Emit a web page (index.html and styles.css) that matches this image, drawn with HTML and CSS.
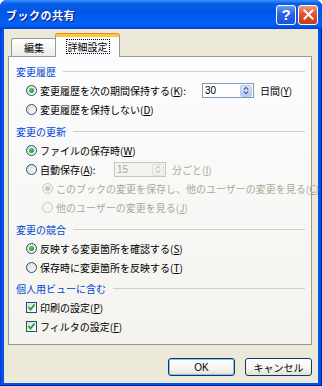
FILE: index.html
```html
<!DOCTYPE html>
<html>
<head>
	<title>ブックの共有</title>
	<link rel="stylesheet" href="styles.css">
</head>
<body>

	<div class="window">
		<div class="titlebar">
			<span class="title">ブックの共有</span>
			<div class="caption-buttons">
				<span class="cap-btn help">?</span>
				<span class="cap-btn close">
					<svg width="11" height="11" viewBox="0 0 11 11"><path d="M1.5 1.5 L9.5 9.5 M9.5 1.5 L1.5 9.5" stroke="#fff" stroke-width="2" stroke-linecap="square"/></svg>
				</span>
			</div>
		</div>

		<div class="client">
			<div class="tabs">
				<div class="tab">編集</div>
				<div class="tab active"><span class="focus">詳細設定</span></div>
			</div>

			<div class="panel">
				<!-- 変更履歴 -->
				<div class="group-title">変更履歴</div>
				<div class="row">
					<span class="radio checked"></span>
					<span class="label wide-k">変更履歴を次の期間保持する(<u>K</u>):</span>
					<span class="spin">
						<span class="spin-value">30</span>
						<span class="spin-btn">
							<svg width="11" height="11" viewBox="0 0 11 11"><path d="M3 4.5 L5.5 2 L8 4.5 M3 6.5 L5.5 9 L8 6.5" fill="none" stroke="#4d6185" stroke-width="1.4"/></svg>
						</span>
					</span>
					<span class="label after">日間(<u>Y</u>)</span>
				</div>
				<div class="row">
					<span class="radio"></span>
					<span class="label">変更履歴を保持しない(<u>D</u>)</span>
				</div>

				<!-- 変更の更新 -->
				<div class="group-title second">変更の更新</div>
				<div class="row">
					<span class="radio checked"></span>
					<span class="label">ファイルの保存時(<u>W</u>)</span>
				</div>
				<div class="row">
					<span class="radio"></span>
					<span class="label wide-a">自動保存(<u>A</u>):</span>
					<span class="spin disabled">
						<span class="spin-value">15</span>
						<span class="spin-btn">
							<svg width="11" height="11" viewBox="0 0 11 11"><path d="M3 4.5 L5.5 2 L8 4.5 M3 6.5 L5.5 9 L8 6.5" fill="none" stroke="#c9c7ba" stroke-width="1.4"/></svg>
						</span>
					</span>
					<span class="label after disabled-text">分ごと(<u>I</u>)</span>
				</div>
				<div class="row sub">
					<span class="radio checked disabled"></span>
					<span class="label disabled-text">このブックの変更を保存し、他のユーザーの変更を見る(<u>C</u>)</span>
				</div>
				<div class="row sub">
					<span class="radio disabled"></span>
					<span class="label disabled-text">他のユーザーの変更を見る(<u>J</u>)</span>
				</div>

				<!-- 変更の競合 -->
				<div class="group-title">変更の競合</div>
				<div class="row">
					<span class="radio checked"></span>
					<span class="label">反映する変更箇所を確認する(<u>S</u>)</span>
				</div>
				<div class="row">
					<span class="radio"></span>
					<span class="label">保存時に変更箇所を反映する(<u>T</u>)</span>
				</div>

				<!-- 個人用ビュー -->
				<div class="group-title">個人用ビューに含む</div>
				<div class="row">
					<span class="checkbox">
						<svg width="9" height="9" viewBox="0 0 9 9"><path d="M1.5 4 L3.5 6.5 L7.5 1.5" fill="none" stroke="#21a121" stroke-width="1.8"/></svg>
					</span>
					<span class="label">印刷の設定(<u>P</u>)</span>
				</div>
				<div class="row">
					<span class="checkbox">
						<svg width="9" height="9" viewBox="0 0 9 9"><path d="M1.5 4 L3.5 6.5 L7.5 1.5" fill="none" stroke="#21a121" stroke-width="1.8"/></svg>
					</span>
					<span class="label">フィルタの設定(<u>F</u>)</span>
				</div>
			</div>

			<div class="buttons">
				<button class="btn default">OK</button>
				<button class="btn">キャンセル</button>
			</div>
		</div>
	</div>

</body>
</html>
```

FILE: styles.css
```css
* {
	box-sizing: border-box;
}

body {
	margin: 0;
	background: #fff;
	font-family: "Noto Sans CJK JP", "Liberation Sans", sans-serif;
	font-size: 10px;
	color: #000;
}

.window {
	width: 322px;
	height: 386px;
	display: flex;
	flex-direction: column;
	background: #0055e5;
	border-radius: 7px 7px 0 0;
	box-shadow: inset 1px 0 #0831d9, inset -1px 0 #001ea0, inset 0 -1px #001ea0;
}

/* title bar */
.titlebar {
	height: 29px;
	display: flex;
	align-items: center;
	justify-content: space-between;
	padding: 0 4px 0 6px;
	border-radius: 7px 7px 0 0;
	background: linear-gradient(to bottom, #3d95ff 0%, #0a5fe8 12%, #0055e5 40%, #0062f7 80%, #0057ea 92%, #003dd7 100%);
}

.title {
	color: #fff;
	font-weight: bold;
	font-size: 11px;
	letter-spacing: 0.5px;
	text-shadow: 1px 1px #0a1883;
}

.caption-buttons {
	display: flex;
	gap: 2px;
}

.cap-btn {
	width: 20px;
	height: 20px;
	border: 1px solid #fff;
	border-radius: 3px;
	display: flex;
	align-items: center;
	justify-content: center;
}

.help {
	background: linear-gradient(to bottom, #6d9cf5, #2a63e8 45%, #1f52d8);
	color: #fff;
	font-family: "Liberation Sans", sans-serif;
	font-weight: bold;
	font-size: 15px;
}

.close {
	background: linear-gradient(to bottom, #f39a7e, #e0552e 45%, #c93c16);
}

/* dialog client area */
.client {
	flex: 1;
	margin: 0 4px 3px 4px;
	padding: 0 6px 0 4px;
	background: #ece9d8;
	display: flex;
	flex-direction: column;
}

.tabs {
	display: flex;
	align-items: flex-end;
	padding-left: 3px;
	margin-top: 5px;
	height: 22px;
}

.tab {
	height: 18px;
	width: 46px;
	border: 1px solid #919b9c;
	border-bottom: none;
	border-radius: 3px 3px 0 0;
	background: linear-gradient(to bottom, #fff, #ecebe6);
	display: flex;
	align-items: center;
	justify-content: center;
	margin-bottom: 0;
}

.tab.active {
	position: relative;
	z-index: 1;
	height: 23px;
	width: 65px;
	margin-left: -2px;
	margin-bottom: -1px;
	background: #fcfcfe;
	border-top: 3px solid #ffc83c;
	box-shadow: 0 -1px #e68b2c;
	padding-bottom: 2px;
}

.focus {
	border: 1px dotted #000;
	padding: 0 1px;
	line-height: 13px;
}

.panel {
	height: 289px;
	border: 1px solid #919b9c;
	background: linear-gradient(to bottom, #fcfcfe, #f4f3ee);
	padding: 5px 6px 0 7px;
}

.group-title {
	height: 19px;
	display: flex;
	align-items: center;
	gap: 7px;
	color: #0046d5;
}

.group-title::after {
	content: "";
	flex: 1;
	height: 1px;
	background: #d0d0bf;
}

.group-title.second {
	margin-top: 5px;
}

.group-title + .row + .row + .group-title:not(.second),
.row.sub + .group-title {
	margin-top: 2px;
}

.row + .row + .group-title {
	margin-top: 3px;
}

.row {
	height: 19px;
	display: flex;
	align-items: center;
	padding-left: 10px;
	gap: 3px;
}

.row.sub {
	padding-left: 26px;
}

.label {
	white-space: nowrap;
}

.wide-k {
	width: 159px;
}

.wide-a {
	width: 71px;
}

.label.after {
	margin-left: 3px;
}

.disabled-text {
	color: #aca899;
}

/* radio buttons */
.radio {
	width: 11px;
	height: 11px;
	border-radius: 50%;
	border: 1px solid #1c5180;
	background: linear-gradient(135deg, #dcd9cd, #fff);
	display: flex;
	align-items: center;
	justify-content: center;
	flex-shrink: 0;
}

.radio.checked::after {
	content: "";
	width: 5px;
	height: 5px;
	border-radius: 50%;
	background: radial-gradient(circle at 35% 35%, #55d455, #21a121 70%);
}

.radio.disabled {
	border-color: #cac8bb;
	background: #f4f3ee;
}

.radio.disabled.checked::after {
	background: #cac8bb;
}

/* checkboxes */
.checkbox {
	width: 11px;
	height: 11px;
	border: 1px solid #1c5180;
	background: linear-gradient(135deg, #dcdcd7, #fff);
	display: flex;
	align-items: center;
	justify-content: center;
	flex-shrink: 0;
}

/* spin box */
.spin {
	width: 52px;
	height: 15px;
	border: 1px solid #7f9db9;
	background: #fff;
	display: flex;
	align-items: center;
	justify-content: space-between;
	padding: 0 1px 0 2px;
}

.spin-value {
	font-family: "Liberation Sans", sans-serif;
	font-size: 10px;
}

.spin-btn {
	width: 12px;
	height: 12px;
	border-radius: 2px;
	background: linear-gradient(to bottom, #dbe6fd, #b6cbf9);
	border: 1px solid #b4c8f6;
	display: flex;
	align-items: center;
	justify-content: center;
}

.spin.disabled {
	border-color: #c9c7ba;
	background: #f4f3ee;
}

.spin.disabled .spin-value {
	color: #aca899;
}

.spin.disabled .spin-btn {
	background: #f4f3ee;
	border-color: #e2e0d6;
}

/* buttons */
.buttons {
	display: flex;
	justify-content: flex-end;
	gap: 10px;
	margin-top: 13px;
}

.btn {
	width: 67px;
	height: 18px;
	border: 1px solid #003c74;
	border-radius: 3px;
	background: linear-gradient(to bottom, #fff 0%, #f5f4ef 60%, #e3e0d5 100%);
	font-family: "Noto Sans CJK JP", sans-serif;
	font-size: 10px;
	padding: 0;
	color: #000;
}

.btn.default {
	box-shadow: inset 0 0 0 1px #98b8ea;
	font-family: "Liberation Sans", sans-serif;
}
```
